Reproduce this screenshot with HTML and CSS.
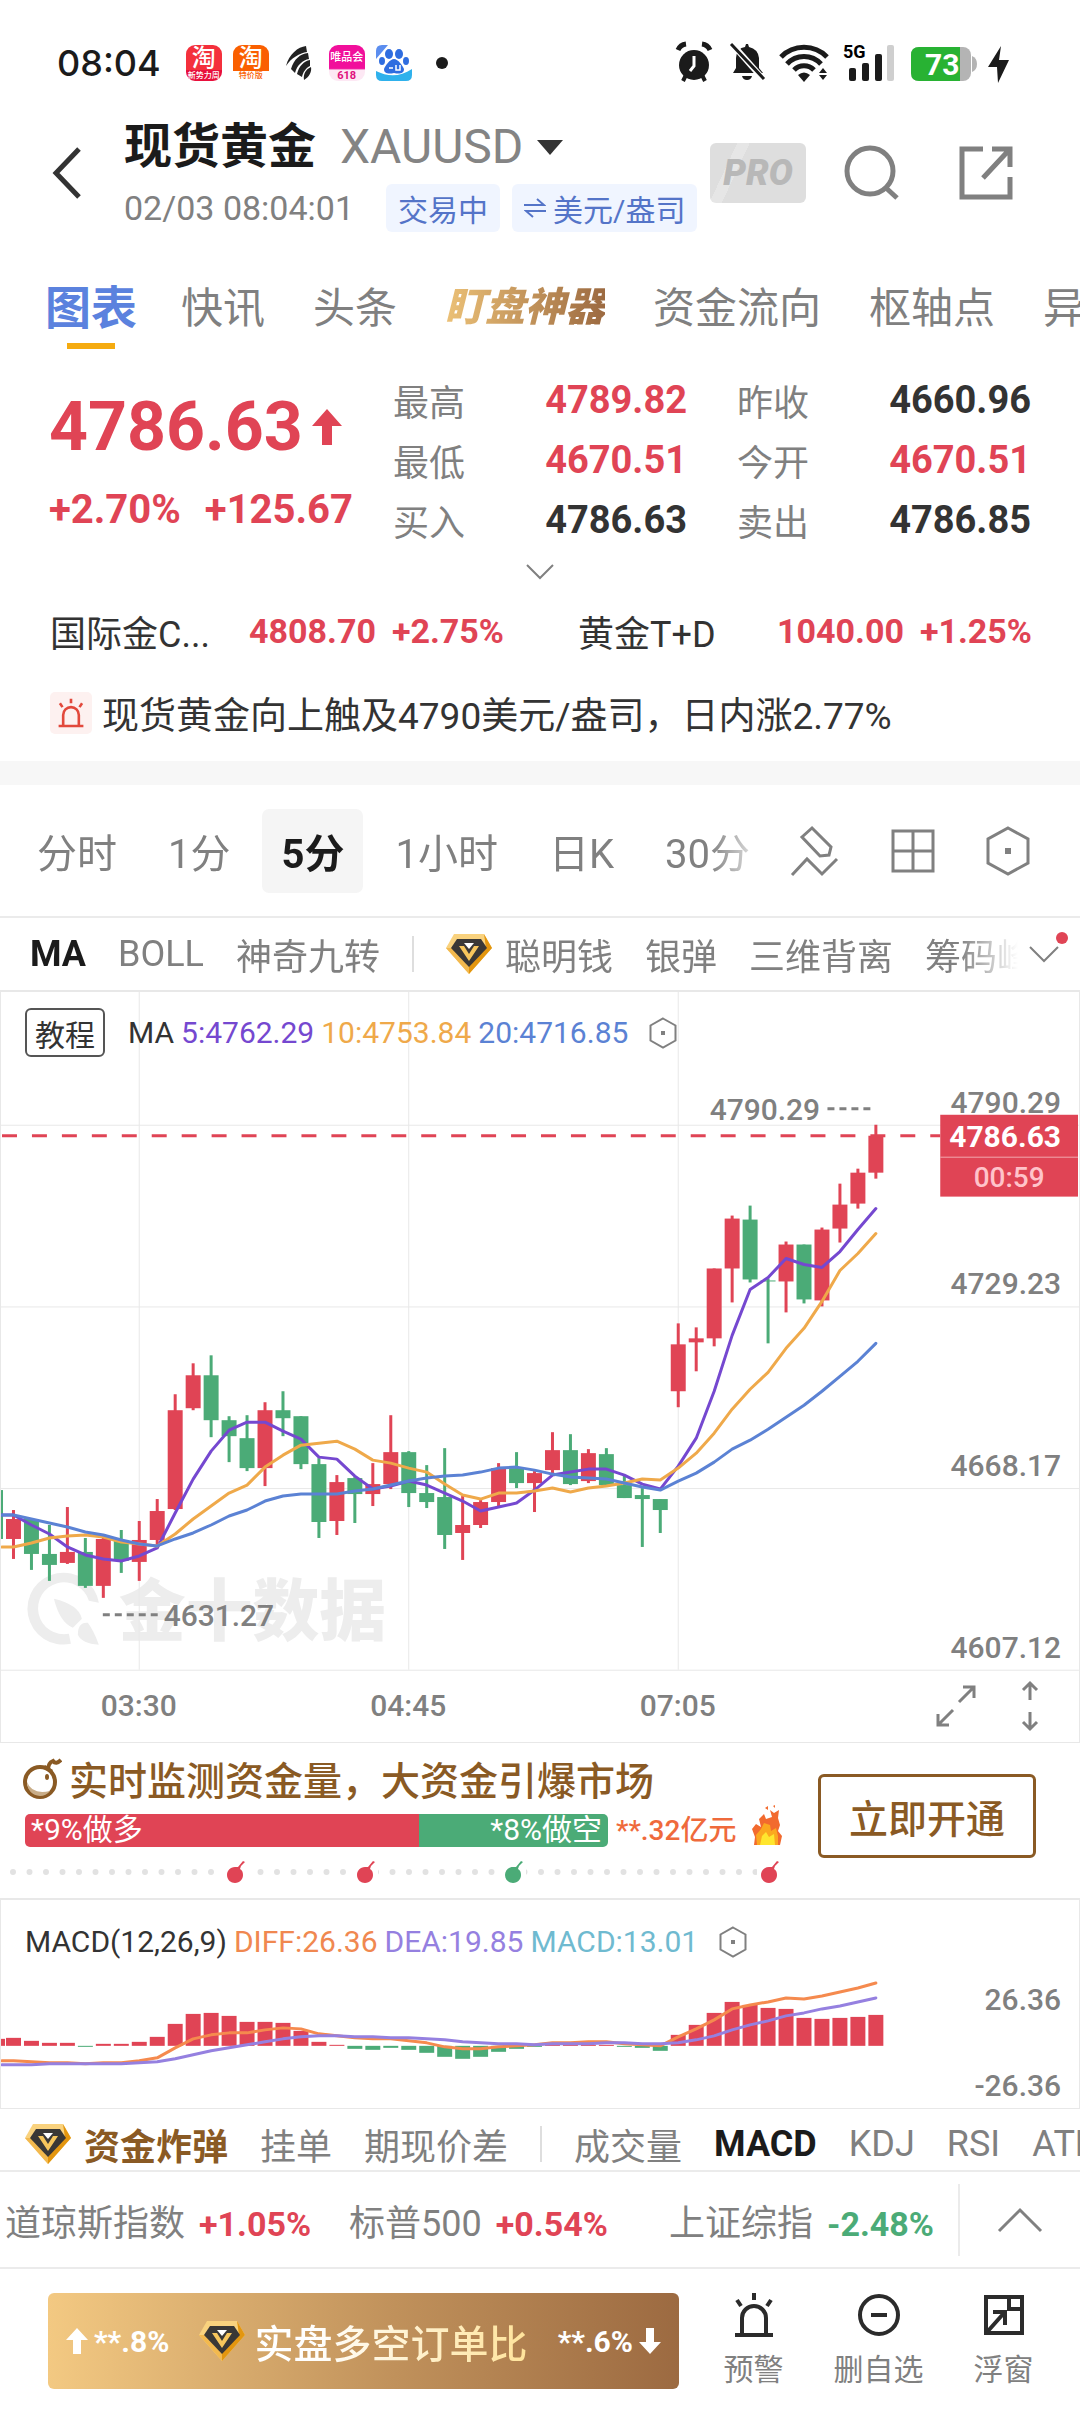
FILE: index.html
```html
<!DOCTYPE html>
<html lang="zh-CN">
<head>
    <meta charset="UTF-8">
    <meta name="viewport" content="width=device-width, initial-scale=1.0">
    <title>现货黄金 XAUUSD</title>
    <link rel="stylesheet" href="styles.css">
</head>
<body>
    <!-- iconos compartidos -->
    <svg class="sprite" aria-hidden="true">
        <symbol id="hex" viewBox="0 0 28 32">
            <path d="M14 1.500L26.500 8.500V23.500L14 30.500L1.500 23.500V8.500Z" fill="none" stroke="currentColor" stroke-width="2"/>
            <rect x="12" y="14" width="4" height="4" fill="currentColor"/>
        </symbol>
        <symbol id="gem" viewBox="0 0 46 40">
            <path d="M8 0H38L46 14L23 40L0 14Z" fill="#f9d27e"/>
            <path d="M38 0L46 14L23 40V31L40 14Z" fill="#e3960f"/>
            <path d="M0 14L23 40V31L6 14Z" fill="#f3b94e"/>
            <path d="M11 5H35L41 14L23 33L5 14Z" fill="#3a3836"/>
            <path d="M13 12H18L23 20L28 12H33L23 27Z" fill="#f7c65c"/>
            <path d="M18 9H28L23 15Z" fill="#fff"/>
        </symbol>
        <symbol id="bomb" viewBox="0 0 18 22">
            <path d="M8 6C3 6 0 10 0 14C0 19 4 22 8 22C13 22 16 18 16 14C16 11 15 9 13 8L14 5L18 1L16 0L11 6Z" fill="currentColor"/>
        </symbol>
        <symbol id="siren" viewBox="0 0 42 46">
            <path d="M9 42V26a12 12 0 0 1 24 0V42M2 43H40M21 1V8M4 8L8 14M38 8L34 14" fill="none" stroke="currentColor" stroke-width="4"/>
        </symbol>
    </svg>

    <div class="statusbar">
        <span class="clock">08:04</span>
        <span class="app app-tao">淘<small>新势力周</small></span>
        <span class="app app-te">淘<small>特价版</small></span>
        <svg class="app-wing" viewBox="0 0 26 34"><path d="M0 20C3 8 12 1 20 0L21 6C14 7 5 12 0 20ZM5 23C8 13 14 8 22 7L23 13C17 14 11 19 9 27ZM11 28C13 20 18 15 24 14V20C20 22 17 26 16 31ZM18 34C17 28 20 23 25 21C26 26 23 31 18 34Z" fill="#222"/></svg>
        <span class="app app-vip">唯品会<small>618</small></span>
        <svg class="app-du" viewBox="0 0 36 36"><path d="M0 26C12 32 24 32 36 24V30Q36 36 30 36H6Q0 36 0 30Z" fill="#2fb1ec"/><path d="M0 6Q0 0 6 0H12L0 14Z" fill="#5b8def"/><g fill="#2f6de0"><ellipse cx="13" cy="9" rx="4" ry="5"/><ellipse cx="23" cy="9" rx="4" ry="5"/><ellipse cx="6" cy="16" rx="3" ry="4"/><ellipse cx="30" cy="16" rx="3" ry="4"/><path d="M18 14C22 14 27 21 28 24C28 29 23 29 18 28C13 29 8 29 8 24C9 21 14 14 18 14Z"/></g><path d="M13 23h4M20 20v5h4v-5" stroke="#fff" stroke-width="1.500" fill="none"/></svg>
        <span class="dot"></span>
        <svg class="sys" viewBox="0 0 336 44" role="img" aria-label="系统状态">
            <g fill="#1b1b1b">
                <circle cx="18" cy="24" r="15"/>
                <path d="M2 9A10 10 0 0 1 10 3M26 3A10 10 0 0 1 34 9" stroke="#1b1b1b" stroke-width="5" fill="none"/>
                <path d="M7 40L10 34M29 40L26 34" stroke="#1b1b1b" stroke-width="4"/>
                <path d="M18 15V25L14 30" stroke="#fff" stroke-width="3" fill="none"/>
                <path d="M57 32L60 27V17Q61 7 69 6L70 3H72L73 6Q82 8 83 17V27L87 32Z"/>
                <path d="M66 35H76Q75 39 71 39Q67 39 66 35Z"/>
                <path d="M57 4L87 38" stroke="#fff" stroke-width="6"/>
                <path d="M55 3L88 38" stroke="#1b1b1b" stroke-width="3"/>
                <path d="M105 16A32 32 0 0 1 151 16M111 23A23 23 0 0 1 145 23M118 29A14 14 0 0 1 138 29" fill="none" stroke="#1b1b1b" stroke-width="5"/>
                <path d="M122 34Q128 29 134 34L128 41Z"/>
                <path d="M143 32L147 27L151 32ZM143 34L147 39L151 34Z"/>
                <rect x="173" y="27" width="7" height="13" rx="2"/>
                <rect x="186" y="22" width="7" height="18" rx="2"/>
                <rect x="199" y="13" width="7" height="27" rx="2"/>
            </g>
            <rect x="211" y="4" width="7" height="36" rx="2" fill="#cfcfcf"/>
            <text x="167" y="17" class="net">5G</text>
            <rect x="235" y="6" width="60" height="34" rx="8" fill="#b4b4b4"/>
            <path d="M296 15Q301 17 301 23Q301 29 296 31Z" fill="#b4b4b4"/>
            <path d="M243 6H284V40H243Q235 40 235 32V14Q235 6 243 6Z" fill="#28b233"/>
            <text x="249" y="34" class="pct">73</text>
            <path d="M325 5L312 26H321L322 42L333 19H323Z" fill="#1b1b1b"/>
        </svg>
    </div>

    <header class="header">
        <button class="icon-btn back" aria-label="返回"><svg width="30" height="54" viewBox="0 0 30 54"><path d="M27 3L4 27L27 51" fill="none" stroke="#333" stroke-width="5"/></svg></button>
        <div class="title">
            <h1>现货黄金 <span>XAUUSD</span><i class="caret"></i></h1>
            <div class="sub">
                <time>02/03 08:04:01</time>
                <span class="badge">交易中</span>
                <button class="badge"><svg width="22" height="20" viewBox="0 0 22 20"><path d="M0 7H20L13 1M22 13H2L9 19" fill="none" stroke="currentColor" stroke-width="2"/></svg>美元/盎司</button>
            </div>
        </div>
        <div class="actions">
            <button class="pro">PRO</button>
            <button class="icon-btn" aria-label="搜索"><svg width="56" height="56" viewBox="0 0 56 56" fill="none" stroke="#808080" stroke-width="5"><circle cx="26" cy="26" r="23"/><path d="M41 42L53 53"/></svg></button>
            <button class="icon-btn" aria-label="分享"><svg width="56" height="56" viewBox="0 0 56 56" fill="none" stroke="#808080" stroke-width="5"><path d="M25 4H4V52H52V32M34 4H52V22M52 4L25 33"/></svg></button>
        </div>
    </header>

    <nav class="tabs">
        <a class="active" href="#chart">图表</a>
        <a href="#">快讯</a>
        <a href="#">头条</a>
        <a class="gold" href="#">盯盘神器</a>
        <a href="#">资金流向</a>
        <a href="#">枢轴点</a>
        <a href="#">异动</a>
    </nav>

    <section class="quote">
        <div class="last">
            <div class="price">4786.63<svg width="30" height="36" viewBox="0 0 30 36"><path d="M15 0L30 17H20V36H10V17H0Z" fill="currentColor"/></svg></div>
            <div class="change"><span>+2.70%</span><span>+125.67</span></div>
        </div>
        <dl class="stats">
            <dt>最高</dt><dd class="up">4789.82</dd><dt>昨收</dt><dd>4660.96</dd>
            <dt>最低</dt><dd class="up">4670.51</dd><dt>今开</dt><dd class="up">4670.51</dd>
            <dt>买入</dt><dd>4786.63</dd><dt>卖出</dt><dd>4786.85</dd>
        </dl>
    </section>
    <button class="icon-btn more" aria-label="展开"><svg width="28" height="16" viewBox="0 0 28 16"><path d="M1 1L14 14L27 1" fill="none" stroke="#808080" stroke-width="2"/></svg></button>

    <section class="related">
        <div><span>国际金C...</span><b>4808.70</b><b>+2.75%</b></div>
        <div><span>黄金T+D</span><b>1040.00</b><b>+1.25%</b></div>
    </section>
    <a class="alert" href="#">
        <span class="alert-icon"><svg width="28" height="30"><use href="#siren"/></svg></span>
        现货黄金向上触及4790美元/盎司，日内涨2.77%
    </a>

    <div class="periods">
        <div class="period-list">
            <button>分时</button>
            <button>1分</button>
            <button class="active">5分</button>
            <button>1小时</button>
            <button>日K</button>
            <button>30分</button>
        </div>
        <div class="period-tools">
            <button class="icon-btn" aria-label="画线"><svg width="50" height="52" viewBox="0 0 50 52" fill="none" stroke="#808080" stroke-width="3"><path d="M22 3L12 12L30 31L39 30L41 22Z M2 50L17 34L32 49L47 34"/></svg></button>
            <button class="icon-btn" aria-label="多图"><svg width="44" height="44" viewBox="0 0 44 44" fill="none" stroke="#808080" stroke-width="3"><path d="M2 2H42V42H2ZM22 2V42M2 22H42"/></svg></button>
            <button class="icon-btn" aria-label="设置"><svg width="44" height="50" viewBox="0 0 44 50"><path d="M22 2L42 13V37L22 48L2 37V13Z" fill="none" stroke="#808080" stroke-width="3"/><rect x="19" y="22" width="6" height="6" fill="#808080"/></svg></button>
        </div>
    </div>

    <div class="rail">
        <div class="rail-list fade">
            <button class="active">MA</button>
            <button>BOLL</button>
            <button>神奇九转</button>
            <i class="bar"></i>
            <button><svg class="gem"><use href="#gem"/></svg>聪明钱</button>
            <button>银弹</button>
            <button>三维背离</button>
            <button>筹码峰</button>
        </div>
        <button class="icon-btn rail-more" aria-label="更多指标"><svg width="32" height="18" viewBox="0 0 32 18"><path d="M2 2L16 16L30 2" fill="none" stroke="#808080" stroke-width="2"/></svg><i></i></button>
    </div>

    <section class="chart" id="chart">
        <div class="legend">
            <button class="guide">教程</button>
            <span>MA</span><span class="ma5">5:4762.29</span><span class="ma10">10:4753.84</span><span class="ma20">20:4716.85</span>
            <svg class="hex"><use href="#hex"/></svg>
        </div>
        <svg class="plot" viewBox="0 0 1080 751">
            <g fill="#ededed">
                <path d="M70 653A36 36 0 1 1 98 612L88 610A26 26 0 1 0 68 643Z"/>
                <path d="M53 608Q78 614 81 628L72 637Q59 632 53 608ZM77 644Q77 631 87 632Q93 640 98 654Q81 653 77 644Z"/>
                <text class="watermark" x="118" y="644">金十数据</text>
            </g>
            <path class="grid" d="M138.500 0V679M408.500 0V679M678.500 0V679M0 133.500H1080M0 315.500H1080M0 497.500H1080M0 679.500H1080"/>
            <g id="candles"></g>
            <path class="now" d="M1 144H941"/>
            <g class="axis">
                <text x="710" y="128">4790.29</text>
                <path d="M828 117H872M102 624H158"/>
                <text x="163" y="635">4631.27</text>
                <text class="end" x="1062" y="121">4790.29</text>
                <text class="end" x="1062" y="303">4729.23</text>
                <text class="end" x="1062" y="485">4668.17</text>
                <text class="end" x="1062" y="667">4607.12</text>
                <text class="mid" x="138" y="725">03:30</text>
                <text class="mid" x="408" y="725">04:45</text>
                <text class="mid" x="678" y="725">07:05</text>
            </g>
            <rect x="941" y="123" width="138" height="82" fill="#e04455"/>
            <path d="M941 165.500H1079" stroke="#f2a8b0"/>
            <text class="tag" x="1062" y="155">4786.63</text>
            <text class="timer" x="1010" y="195">00:59</text>
        </svg>
        <div class="chart-tools">
            <button class="icon-btn" aria-label="全屏"><svg width="42" height="44" viewBox="0 0 42 44" fill="none" stroke="#808080" stroke-width="3"><path d="M24 18L39 3M28 3H39V14M18 26L3 41M14 41H3V30"/></svg></button>
            <button class="icon-btn" aria-label="调整高度"><svg width="18" height="52" viewBox="0 0 18 52" fill="none" stroke="#808080" stroke-width="3"><path d="M9 20V3M2 10L9 3L16 10M9 32V49M2 42L9 49L16 42"/></svg></button>
        </div>
    </section>

    <section class="promo">
        <div class="promo-main">
            <h2><svg width="40" height="42" viewBox="0 0 40 42"><path d="M26 13Q26 6 31 4Q34 8 39 3" fill="none" stroke="#8a5a24" stroke-width="4"/><path d="M23 8L31 13L28 17L20 12Z" fill="#8a5a24"/><circle cx="18" cy="25" r="15" fill="#fff" stroke="#8a5a24" stroke-width="4"/><path d="M5 25Q10 38 28 34Q24 39 18 39Q6 38 5 25Z" fill="#c9ad88"/><ellipse cx="25" cy="20" rx="2" ry="3" fill="#8a5a24"/></svg>实时监测资金量，大资金引爆市场</h2>
            <div class="ratio">
                <div class="ratio-bar"><span class="long">*9%做多</span><span class="short">*8%做空</span></div>
                <strong>**.32亿元</strong>
                <svg width="30" height="42" viewBox="0 0 30 42"><path d="M2 40L3 32L0 24L4 19L9 22L7 14L12 9L14 14L20 12L18 5L22 8L27 5L26 13L28 20L26 26L30 31L28 40Z" fill="#f26a2e"/><path d="M5 40L4 30L9 24L12 18L18 20L19 26L24 23L26 31L26 40Z" fill="#fba81f"/><path d="M8 40L10 31L14 27L17 32L22 29L23 40Z" fill="#ffe62e"/><path d="M13 3l3-2v4zM21 1l2-1v3z" fill="#f26a2e"/></svg>
            </div>
            <svg class="track" viewBox="0 0 790 24">
                <path d="M13 12H790" stroke="#e2e2e2" stroke-width="6" stroke-linecap="round" stroke-dasharray="0 16.500"/>
                <g fill="#fff"><path d="M224 0h24v24h-24zM354 0h24v24h-24zM502 0h24v24h-24zM757 0h33v24h-33z"/></g>
                <use href="#bomb" x="227" y="1" width="18" height="22" color="#e04455"/>
                <use href="#bomb" x="357" y="1" width="18" height="22" color="#e04455"/>
                <use href="#bomb" x="505" y="1" width="18" height="22" color="#4bab77"/>
                <use href="#bomb" x="761" y="1" width="18" height="22" color="#e04455"/>
            </svg>
        </div>
        <button class="open-btn">立即开通</button>
    </section>

    <section class="macd">
        <div class="legend">
            <span>MACD(12,26,9)</span><span class="diff">DIFF:26.36</span><span class="dea">DEA:19.85</span><span class="osc">MACD:13.01</span>
            <svg class="hex"><use href="#hex"/></svg>
        </div>
        <svg class="plot" viewBox="0 0 1080 147">
            <g id="macd"></g>
            <g class="axis">
                <text class="end" x="1062" y="48">26.36</text>
                <text class="end" x="1062" y="134">-26.36</text>
            </g>
        </svg>
    </section>

    <div class="rail rail-bottom">
        <div class="rail-list">
            <button class="bomb-tab"><svg class="gem"><use href="#gem"/></svg>资金炸弹</button>
            <button>挂单</button>
            <button>期现价差</button>
            <i class="bar"></i>
            <button>成交量</button>
            <button class="active">MACD</button>
            <button>KDJ</button>
            <button>RSI</button>
            <button>ATR</button>
        </div>
    </div>

    <div class="indices">
        <div class="index-list">
            <span>道琼斯指数<b class="up">+1.05%</b></span>
            <span>标普500<b class="up">+0.54%</b></span>
            <span>上证综指<b class="down">-2.48%</b></span>
        </div>
        <button class="icon-btn" aria-label="展开指数"><svg width="46" height="26" viewBox="0 0 46 26"><path d="M2 24L23 3L44 24" fill="none" stroke="#808080" stroke-width="3"/></svg></button>
    </div>

    <footer class="bottom">
        <button class="orders">
            <span class="side"><svg width="22" height="26" viewBox="0 0 22 26"><path d="M11 0L22 12H15V26H7V12H0Z" fill="#fff"/></svg>**.8%</span>
            <span class="orders-title"><svg class="gem"><use href="#gem"/></svg><span>实盘多空订单比</span></span>
            <span class="side">**.6%<svg width="22" height="26" viewBox="0 0 22 26"><path d="M11 26L22 14H15V0H7V14H0Z" fill="#fff"/></svg></span>
        </button>
        <button class="tool"><svg width="42" height="46"><use href="#siren"/></svg>预警</button>
        <button class="tool"><svg width="46" height="46" viewBox="0 0 46 46" fill="none" stroke="#2b2b2b" stroke-width="4"><circle cx="23" cy="23" r="19"/><path d="M15 23H31"/></svg>删自选</button>
        <button class="tool"><svg width="44" height="46" viewBox="0 0 44 46" fill="none" stroke="#2b2b2b" stroke-width="4"><path d="M4 5H40V41H4ZM27 5V17H40M6 39L22 21M11 20H23V33"/></svg>浮窗</button>
    </footer>

    <script src="script.js"></script>
</body>
</html>
```
FILE: styles.css
```css
* {
    box-sizing: border-box;
}
body {
    margin: 0;
    background-color: #fff;
    color: #333;
    font-family: Roboto, "Noto Sans CJK SC", sans-serif;
    overflow-x: hidden;
}
button {
    border: none;
    background: none;
    padding: 0;
    color: inherit;
    font: inherit;
    white-space: nowrap;
    cursor: pointer;
}
a {
    color: inherit;
    text-decoration: none;
}
svg {
    display: block;
    flex: none;
}
.sprite {
    position: absolute;
    width: 0;
    height: 0;
}
.icon-btn {
    display: flex;
    align-items: center;
    justify-content: center;
}
.up {
    color: #e04455;
}
.down {
    color: #4bab77;
}

/* barra de estado */
.statusbar {
    display: flex;
    align-items: center;
    gap: 11px;
    height: 114px;
    padding: 12px 66px 0 57px;
}
.clock {
    font-family: Inter, sans-serif;
    font-size: 36px;
    font-weight: 500;
    color: #1b1b1b;
    margin-right: 14px;
}
.app {
    display: flex;
    flex-direction: column;
    align-items: center;
    width: 36px;
    height: 36px;
    border-radius: 9px;
    overflow: hidden;
    color: #fff;
    font-size: 24px;
    line-height: 26px;
    font-weight: 500;
}
.app small {
    font-size: 8px;
    line-height: 10px;
    white-space: nowrap;
}
.app-tao {
    background: linear-gradient(#f4303c 70%, #e8103c 70%);
}
.app-te {
    background: linear-gradient(#fa5f00 72%, #fff 72%);
}
.app-te small {
    color: #fa5f00;
}
.app-vip {
    background: linear-gradient(#f10f9b 65%, #fde8f4 70%);
    font-size: 11px;
    white-space: nowrap;
}
.app-vip small {
    color: #e0107c;
    font-size: 11px;
    font-weight: bold;
}
.app-wing {
    width: 26px;
    height: 34px;
    margin: 0 6px;
}
.app-du {
    width: 36px;
    height: 36px;
}
.dot {
    width: 12px;
    height: 12px;
    margin-left: 13px;
    border-radius: 50%;
    background-color: #1b1b1b;
}
.sys {
    width: 340px;
    height: 44px;
    margin-left: auto;
}
.net {
    font: bold 18px Roboto, sans-serif;
}
.pct {
    font: bold 30px Roboto, sans-serif;
    fill: #fff;
}

/* cabecera */
.header {
    display: flex;
    align-items: center;
    height: 118px;
    padding: 0 66px 0 52px;
}
.back {
    margin-right: 42px;
}
.title {
    padding-top: 6px;
}
.title h1 {
    display: flex;
    align-items: center;
    gap: 24px;
    margin: 0;
    font-size: 48px;
    line-height: 64px;
    color: #1b1b1b;
    white-space: nowrap;
}
.title h1 span {
    font-weight: normal;
    color: #848484;
}
.caret {
    margin-left: -10px;
    border: 13px solid transparent;
    border-top: 15px solid #333;
    border-bottom: 0;
}
.sub {
    display: flex;
    align-items: center;
    gap: 12px;
    height: 58px;
}
.sub time {
    font-size: 34px;
    color: #808080;
    margin-right: 20px;
    white-space: nowrap;
}
.badge {
    display: flex;
    align-items: center;
    gap: 7px;
    height: 48px;
    padding: 0 12px;
    border-radius: 6px;
    background-color: #f0f5ff;
    color: #5474c8;
    font-size: 30px;
    white-space: nowrap;
}
.actions {
    display: flex;
    align-items: center;
    gap: 38px;
    margin-left: auto;
}
.actions .icon-btn + .icon-btn {
    margin-left: 20px;
}
.pro {
    width: 96px;
    height: 60px;
    border-radius: 6px;
    background: linear-gradient(115deg, #dedede 22%, #e6e6e6 22%, #e6e6e6 32%, #dedede 32%);
    color: #b8b8b8;
    font: italic 900 36px Roboto, sans-serif;
}

/* secciones */
.tabs {
    display: flex;
    align-items: center;
    gap: 48px;
    height: 138px;
    padding: 6px 0 0 45px;
    font-size: 42px;
    color: #808080;
    white-space: nowrap;
    overflow: hidden;
}
.tabs .active {
    position: relative;
    font-size: 46px;
    font-weight: bold;
    color: #5b82de;
    margin-right: -4px;
}
.tabs .active::after {
    content: "";
    position: absolute;
    left: 22px;
    right: 22px;
    bottom: -12px;
    height: 6px;
    background-color: #f5ab10;
}
.tabs .gold {
    font-weight: 900;
    font-style: italic;
    font-size: 40px;
    background: linear-gradient(90deg, #ecc177, #9c6a41);
    -webkit-background-clip: text;
    background-clip: text;
    color: transparent;
}

/* cotizacion */
.quote {
    display: flex;
    padding: 0 49px;
}
.last {
    width: 344px;
    color: #e04455;
    font-weight: bold;
}
.price {
    display: flex;
    align-items: center;
    gap: 9px;
    height: 114px;
    font-size: 68px;
    line-height: 114px;
}
.change {
    display: flex;
    gap: 24px;
    font-size: 40px;
    line-height: 52px;
}
.stats {
    flex: 1;
    display: grid;
    grid-template-columns: auto 1fr auto 1fr;
    grid-auto-rows: 60px;
    align-items: center;
    margin: 0;
}
.stats dt {
    font-size: 36px;
    color: #808080;
    white-space: nowrap;
}
.stats dt:nth-of-type(even) {
    padding-left: 50px;
}
.stats dd {
    margin: 0;
    text-align: right;
    font-size: 38px;
    font-weight: bold;
}
.more {
    width: 100%;
    height: 44px;
}
.related {
    display: grid;
    grid-template-columns: 528px 1fr;
    padding: 0 49px 0 50px;
    height: 74px;
    align-items: center;
}
.related div {
    display: flex;
    align-items: center;
    gap: 16px;
    font-size: 36px;
    white-space: nowrap;
}
.related span {
    width: 183px;
}
.related b {
    font-size: 34px;
    color: #e04455;
}
.alert {
    display: flex;
    align-items: center;
    gap: 10px;
    height: 93px;
    padding: 0 50px 4px;
    font-size: 37px;
    white-space: nowrap;
}
.alert-icon {
    padding: 6px 7px;
    border-radius: 5px;
    background-color: #fdf1f0;
    color: #e2493c;
}

/* periodos */
.periods {
    display: flex;
    align-items: center;
    justify-content: space-between;
    height: 157px;
    padding: 0 50px 0 18px;
    border-top: 24px solid #f7f7f7;
    border-bottom: 2px solid #ebebeb;
}
.period-list {
    display: flex;
    gap: 13px;
    font-size: 40px;
    color: #808080;
    -webkit-mask-image: linear-gradient(90deg, #000 92%, transparent);
    mask-image: linear-gradient(90deg, #000 92%, transparent);
}
.period-list button {
    height: 84px;
    padding: 0 19px;
    border-radius: 7px;
}
.period-list .active {
    background-color: #f5f5f5;
    color: #1b1b1b;
    font-weight: bold;
}
.period-tools {
    display: flex;
    align-items: center;
    gap: 51px;
}

/* indicadores */
.rail {
    display: flex;
    align-items: center;
    height: 72px;
    padding-left: 30px;
    font-size: 36px;
    color: #808080;
}
.rail-list {
    flex: 1;
    display: flex;
    align-items: center;
    gap: 32px;
    overflow: hidden;
}
.rail-list button {
    display: flex;
    align-items: center;
    gap: 13px;
}
.rail-list .active {
    font-weight: bold;
    color: #1b1b1b;
}
.fade {
    -webkit-mask-image: linear-gradient(90deg, #000 94%, transparent);
    mask-image: linear-gradient(90deg, #000 94%, transparent);
}
.bar {
    flex: none;
    width: 2px;
    height: 36px;
    background-color: #dedede;
}
.gem {
    width: 46px;
    height: 40px;
}
.rail-more {
    position: relative;
    width: 62px;
    height: 72px;
    padding-right: 10px;
}
.rail-more i {
    position: absolute;
    top: 14px;
    right: 12px;
    width: 12px;
    height: 12px;
    border-radius: 50%;
    background-color: #e04455;
}

/* graficos */
.chart, .macd {
    position: relative;
    border: 1px solid #e8e8e8;
    border-top-width: 2px;
    margin-bottom: -1px;
}
.plot {
    width: 100%;
    height: auto;
}
.legend {
    display: flex;
    align-items: center;
    gap: 7px;
    padding-left: 24px;
    font-size: 30px;
    white-space: nowrap;
}
.chart .legend {
    position: absolute;
    top: 16px;
    left: 0;
}
.guide {
    height: 49px;
    margin-right: 16px;
    padding: 0 8px;
    border: 2px solid #555;
    border-radius: 6px;
}
.hex {
    width: 28px;
    height: 32px;
    margin-left: 14px;
    color: #808080;
}
.ma5 {
    color: #7548d0;
}
.ma10 {
    color: #efa94a;
}
.ma20 {
    color: #5b82d4;
}
.diff {
    color: #f08850;
}
.dea {
    color: #9580e0;
}
.osc {
    color: #6fbad0;
}
.grid {
    fill: none;
    stroke: #e8e8e8;
}
.watermark {
    font: 900 67px "Noto Sans CJK SC", sans-serif;
}
.line {
    fill: none;
    stroke-width: 3;
    stroke-linejoin: round;
    stroke-linecap: round;
}
.now {
    stroke: #e04455;
    stroke-width: 3;
    stroke-dasharray: 15 15;
}
.axis text {
    font: 500 30px Roboto, sans-serif;
    fill: #808080;
}
.axis path {
    stroke: #808080;
    stroke-width: 3;
    stroke-dasharray: 7 5;
}
.axis .end, .tag {
    text-anchor: end;
}
.axis .mid, .timer {
    text-anchor: middle;
}
.tag {
    font: bold 30px Roboto, sans-serif;
    fill: #fff;
}
.timer {
    font: 500 28px Roboto, sans-serif;
    fill: #ffc3ca;
}
.chart-tools {
    position: absolute;
    right: 40px;
    bottom: 10px;
    display: flex;
    align-items: center;
    gap: 44px;
}

/* promocion */
.promo {
    display: flex;
    align-items: flex-start;
    justify-content: space-between;
    height: 156px;
    padding-right: 44px;
}
.promo-main {
    width: 790px;
}
.promo h2 {
    display: flex;
    align-items: center;
    gap: 7px;
    height: 58px;
    margin: 7px 0 0 22px;
    font-size: 39px;
    font-weight: 500;
    color: #8a5a24;
    white-space: nowrap;
}
.ratio {
    display: flex;
    align-items: flex-end;
    gap: 8px;
    height: 40px;
    margin-left: 25px;
    white-space: nowrap;
}
.ratio-bar {
    display: flex;
    width: 583px;
    height: 33px;
    border-radius: 5px;
    overflow: hidden;
    color: #fff;
    font-size: 30px;
    line-height: 32px;
}
.long {
    flex: 68;
    padding-left: 6px;
    background-color: #e04455;
}
.short {
    flex: 32;
    padding-right: 6px;
    background-color: #4bab77;
    text-align: right;
}
.ratio strong {
    margin-right: 8px;
    font-size: 28px;
    line-height: 32px;
    font-weight: 500;
    color: #ef6a3c;
}
.track {
    width: 790px;
    height: 24px;
    margin-top: 13px;
}
.open-btn {
    width: 218px;
    height: 84px;
    margin-top: 32px;
    border: 3px solid #8a5a24;
    border-radius: 6px;
    font-size: 39px;
    font-weight: 500;
    color: #8a5a24;
}
.macd .legend {
    height: 84px;
    margin-bottom: -22px;
}
.rail-bottom {
    height: 64px;
    padding: 10px 0 0 25px;
    border-bottom: 2px solid #ebebeb;
}
.bomb-tab {
    font-weight: bold;
    color: #8a5a24;
}

/* indices */
.indices {
    display: flex;
    align-items: center;
    height: 97px;
    border-bottom: 2px solid #ebebeb;
    font-size: 36px;
    color: #808080;
}
.index-list {
    flex: 1;
    display: flex;
    gap: 38px;
    padding: 0 24px 0 5px;
    white-space: nowrap;
}
.index-list span:last-child {
    margin-left: auto;
}
.index-list b {
    margin-left: 14px;
    font-size: 34px;
}
.indices .icon-btn {
    width: 122px;
    height: 72px;
    border-left: 2px solid #ebebeb;
}

/* pie */
.bottom {
    display: flex;
    align-items: center;
    height: 144px;
    padding: 0 14px 0 48px;
}
.orders {
    flex: 1;
    display: flex;
    align-items: center;
    justify-content: space-between;
    height: 96px;
    margin-right: 12px;
    padding: 0 18px;
    border-radius: 6px;
    background: linear-gradient(90deg, #f3c982, #c0915b 55%, #9c6a41);
    color: #fff;
}
.side {
    display: flex;
    align-items: center;
    gap: 6px;
    font-size: 30px;
    font-weight: bold;
}
.orders-title {
    display: flex;
    align-items: center;
    gap: 9px;
    font-size: 39px;
    font-weight: 500;
}
.orders-title span {
    background: linear-gradient(90deg, #fff 20%, #ffe39a);
    -webkit-background-clip: text;
    background-clip: text;
    color: transparent;
}
.tool {
    display: flex;
    flex-direction: column;
    align-items: center;
    gap: 12px;
    width: 125px;
    font-size: 30px;
    line-height: 40px;
    color: #808080;
}
.tool svg {
    color: #2b2b2b;
}
```
FILE: script.js
```javascript
// posicion x de cada vela
const STEP = 18;
const START = 12.5;
const x = i => START + i * STEP;

const RED = '#e04455';
const GREEN = '#4bab77';

// [maximo, cuerpo arriba, cuerpo abajo, minimo, sube]
const candles = [
    [519, 528, 548, 568, 1], [528, 528, 563, 579, 0], [534, 563, 574, 590, 0], [516, 561, 572, 573, 1],
    [547, 561, 595, 597, 0], [547, 548, 595, 607, 1], [539, 549, 570, 582, 0], [530, 549, 571, 590, 1],
    [508, 520, 549, 557, 1], [403, 419, 518, 519, 1], [372, 384, 417, 419, 1], [364, 384, 429, 446, 0],
    [425, 429, 445, 471, 0], [424, 447, 477, 480, 0], [411, 419, 477, 495, 1], [400, 419, 427, 445, 0],
    [425, 425, 473, 478, 0], [467, 473, 531, 547, 0], [484, 491, 530, 544, 1], [486, 487, 503, 532, 0],
    [472, 493, 503, 515, 1], [424, 461, 493, 498, 1], [460, 461, 502, 516, 0], [474, 502, 511, 517, 0],
    [457, 506, 544, 558, 0], [505, 534, 542, 569, 1], [509, 511, 534, 537, 1], [472, 477, 511, 517, 1],
    [461, 477, 492, 497, 0], [480, 482, 492, 521, 1], [441, 459, 479, 482, 1], [443, 459, 493, 494, 0],
    [458, 462, 490, 492, 1], [457, 463, 494, 494, 0], [484, 494, 507, 507, 0], [497, 504, 508, 556, 0],
    [508, 508, 519, 542, 0], [332, 353, 400, 416, 1], [336, 347, 351, 380, 1], [277, 277, 347, 355, 1],
    [224, 227, 277, 311, 1], [214, 228, 288, 291, 0], [287, 289, 290, 352, 0], [250, 253, 290, 321, 1],
    [253, 253, 308, 312, 0], [236, 238, 309, 315, 1], [192, 213, 237, 251, 1], [177, 181, 212, 217, 1],
    [133, 144, 181, 187, 1]
];

const ma5 = [524, 534, 543, 556, 564, 568, 570, 565, 557, 522, 488, 460, 439, 431, 431, 440, 448, 466, 468, 485, 498, 495, 490, 494, 502, 510, 520, 516, 512, 499, 484, 481, 478, 478, 484, 493, 498, 475, 447, 400, 344, 298, 286, 267, 273, 276, 260, 238, 217];
const ma10 = [556, 552, 547, 545, 544, 546, 551, 553, 555, 543, 528, 515, 502, 494, 476, 464, 454, 452, 450, 458, 469, 472, 477, 481, 493, 504, 508, 502, 502, 500, 497, 501, 497, 495, 492, 488, 489, 477, 462, 442, 418, 398, 381, 357, 337, 310, 279, 262, 242];
const ma20 = [524, 528, 532, 536, 541, 544, 549, 553, 555, 548, 542, 534, 525, 519, 510, 505, 503, 503, 503, 500, 498, 494, 490, 487, 485, 484, 481, 477, 476, 479, 483, 486, 487, 488, 492, 496, 499, 490, 482, 471, 458, 449, 438, 426, 414, 400, 385, 370, 352];

const osc = [8, 5, 3, 3, -1, 2, 2, 4, 9, 22, 32, 33, 30, 24, 24, 23, 15, 4, 1, -3, -4, -2, -4, -7, -11, -13, -11, -6, -3, -1, 1, 2, 1, 1, -1, -2, -5, 11, 21, 33, 44, 41, 38, 37, 28, 27, 28, 29, 31];
const diff = [-15, -16, -17, -17, -18, -17, -17, -15, -12, -2, 7, 11, 13, 13, 16, 18, 17, 12, 10, 8, 7, 7, 5, 3, -1, -3, -3, -1, 0, 1, 3, 3, 4, 4, 2, 1, 0, 9, 17, 26, 37, 41, 44, 48, 47, 50, 54, 58, 63];
const dea = [-19, -19, -18, -18, -18, -18, -18, -17, -16, -13, -9, -5, -2, 1, 4, 7, 9, 10, 10, 9, 9, 8, 8, 7, 6, 4, 3, 2, 2, 1, 2, 2, 2, 3, 3, 2, 2, 3, 6, 10, 16, 21, 25, 30, 33, 37, 40, 44, 48];

function linea(puntos, color) {
    const d = puntos.map((y, i) => `L${x(i)} ${y}`).join('');
    return `<path class="line" stroke="${color}" d="M1 ${puntos[0]}${d}"/>`;
}

let html = `<rect x="0" y="499" width="2" height="49" fill="${GREEN}"/>`;
candles.forEach(([alto, arriba, abajo, bajo, sube], i) => {
    const color = sube ? RED : GREEN;
    html += `<rect x="${x(i) - 1.5}" y="${alto}" width="3" height="${bajo - alto}" fill="${color}"/>`;
    html += `<rect x="${x(i) - 7.5}" y="${arriba}" width="15" height="${abajo - arriba}" fill="${color}"/>`;
});
html += linea(ma5, '#7548d0') + linea(ma10, '#efa94a') + linea(ma20, '#5b82d4');
document.getElementById('candles').innerHTML = html;

// histograma MACD, linea cero
const CERO = 84;
html = `<rect x="0" y="${CERO - 7}" width="4" height="7" fill="${RED}"/>`;
osc.forEach((v, i) => {
    html += `<rect x="${x(i) - 7.5}" y="${v > 0 ? CERO - v : CERO}" width="15" height="${Math.abs(v)}" fill="${v > 0 ? RED : GREEN}"/>`;
});
html += linea(diff.map(v => CERO - v), '#f58a4e') + linea(dea.map(v => CERO - v), '#9580e0');
document.getElementById('macd').innerHTML = html;
```
